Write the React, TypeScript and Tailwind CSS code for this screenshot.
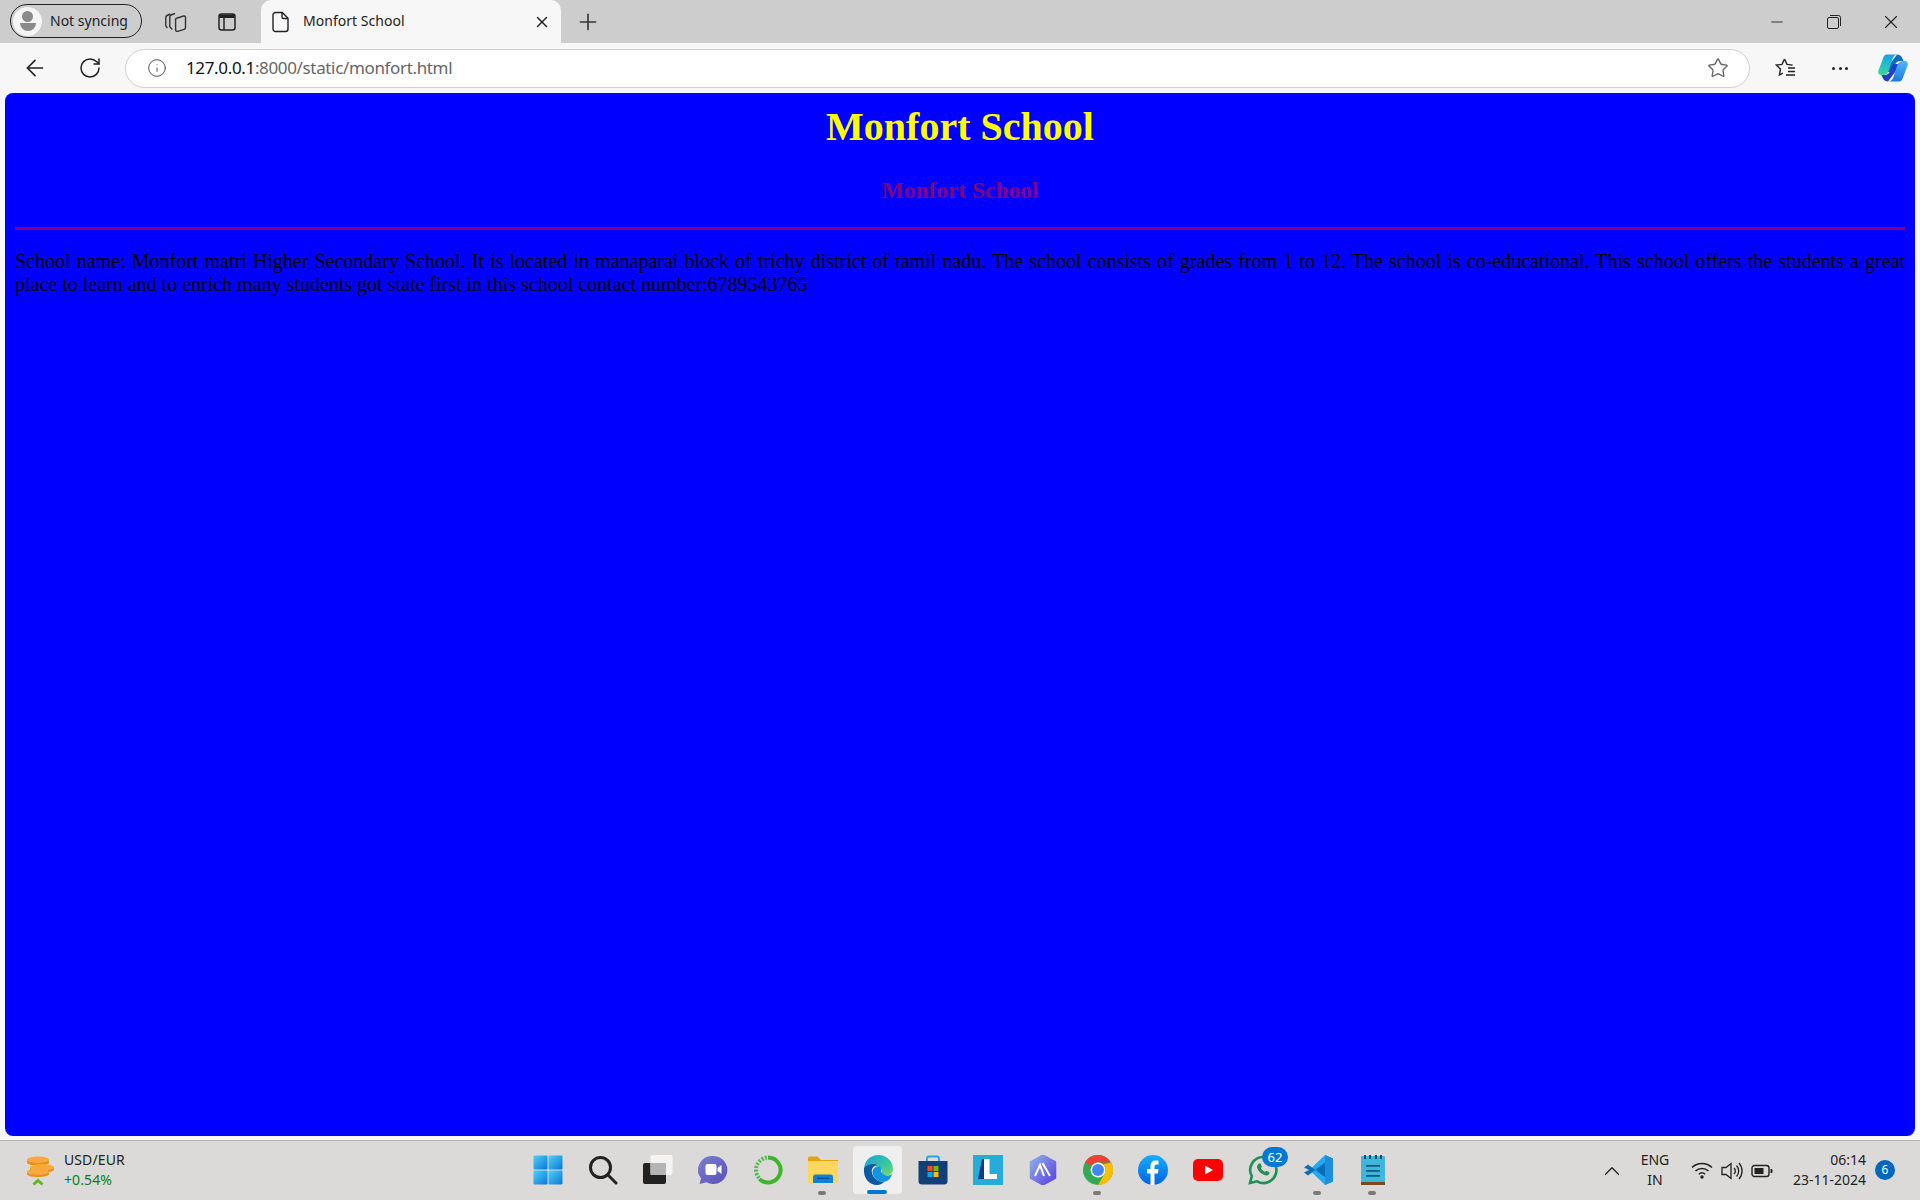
import React from 'react';
import { ArrowLeft, RotateCw, Info, Star, X, Plus, Minus, ChevronUp } from 'lucide-react';

const uiFont = "font-['Noto_Sans',sans-serif]";

const Collections = () => (
  <svg width="24" height="22" viewBox="0 0 24 22" fill="none" stroke="#333" strokeWidth="1.400">
    <path d="M7.500 3 4 4.500a2 2 0 0 0-1.200 1.800v8.500l1.500 2.200" />
    <path d="M12 2.500 8 4a2 2 0 0 0-1.200 1.800v10l2.500 2.700" />
    <path d="M13 7.500 20.500 5a1.500 1.500 0 0 1 2 1.400v10a2 2 0 0 1-1.400 1.900l-6.500 2a1.500 1.500 0 0 1-2-1.400V9.500a2 2 0 0 1 .4-2Z" />
  </svg>
);

const TabActions = () => (
  <svg width="20" height="20" viewBox="0 0 20 20" fill="none">
    <rect x="2" y="2" width="16" height="16" rx="2.500" stroke="#222" strokeWidth="1.500" />
    <path d="M2.500 3.500a1 1 0 0 1 1-1h13a1 1 0 0 1 1 1V6h-15Z" fill="#222" />
    <path d="M7 6v12" stroke="#222" strokeWidth="1.500" />
  </svg>
);

const DocIcon = () => (
  <svg width="18" height="22" viewBox="0 0 18 22" fill="none" stroke="#222" strokeWidth="1.400">
    <path d="M3.500 1.500h6.800L16 7.200V18a2.500 2.500 0 0 1-2.500 2.500h-10A2.500 2.500 0 0 1 1 18V4a2.500 2.500 0 0 1 2.500-2.500Z" />
    <path d="M10 1.800V6a1.500 1.500 0 0 0 1.500 1.500h4.300" />
  </svg>
);

const RestoreIcon = () => (
  <svg width="14" height="14" viewBox="0 0 14 14" fill="none" stroke="#222" strokeWidth="1">
    <rect x="0.500" y="2.500" width="11" height="11" rx="1.500" />
    <path d="M3 .5h8.500a2 2 0 0 1 2 2V11" />
  </svg>
);

const FavouritesIcon = () => (
  <svg width="22" height="22" viewBox="0 0 22 22" fill="none" stroke="#222" strokeWidth="1.400">
    <path d="M9.500 2 12 7.400l5.600.7M9.500 2 7 7.400l-5.600.7 4.100 4L4.400 18l3.400-1.900" />
    <path d="M13 11h7M13 14.500h7M11 18h9" />
  </svg>
);

const Copilot = () => (
  <svg width="30" height="28" viewBox="0 0 30 28">
    <defs>
      <linearGradient id="cpa" x1="0.500" y1="0" x2="0.300" y2="1">
        <stop offset="0" stopColor="#18a0e8" />
        <stop offset="1" stopColor="#3ad7a0" />
      </linearGradient>
      <linearGradient id="cpb" x1="0.600" y1="0" x2="0.400" y2="1">
        <stop offset="0" stopColor="#4db5f5" />
        <stop offset="1" stopColor="#1a78e0" />
      </linearGradient>
    </defs>
    <path d="M19 0.500c2 0 4 1 5 3l1.500 3.500h-3c-3 0-4.500 1.500-5.500 4L14 18H6z" fill="#0f6cc0" />
    <path d="M10 27.500c-2 0-4-1-5-3L3.500 21h3c3 0 4.500-1.500 5.500-4l3-7h8z" fill="#1f3fc8" />
    <path d="M9 .5h11c-3 0-4.500 1.800-5.500 4.500l-3.500 11c-.9 3-3 5-6 5H3c-2 0-3.300-1.800-2.700-4L5 4.500C5.700 2 7 .5 9 .5Z" fill="url(#cpa)" />
    <path d="M21 27.500H10c3 0 4.500-1.800 5.500-4.500l3.500-11c.9-3 3-5 6-5h2c2 0 3.300 1.800 2.700 4L25 23.500c-.7 2.500-2 4-4 4Z" fill="url(#cpb)" />
  </svg>
);

const Coins = () => (
  <svg width="30" height="30" viewBox="0 0 30 30">
    <ellipse cx="13" cy="3.500" rx="11" ry="3" fill="#f9a83a" />
    <path d="M2 3.500v3c0 1.800 5 3 11 3s11-1.200 11-3v-3c0 1.800-5 3-11 3s-11-1.200-11-3Z" fill="#ee8f12" />
    <ellipse cx="17" cy="11" rx="12" ry="3" fill="#f9a83a" />
    <path d="M5 11v2.500c0 1.800 5 3 12 3s12-1.200 12-3V11c0 1.800-5 3-12 3s-12-1.200-12-3Z" fill="#ee8f12" />
    <ellipse cx="13" cy="15.500" rx="11" ry="3" fill="#f9a83a" />
    <path d="M2 15.500v2.500c0 1.800 5 3 11 3s11-1.200 11-3v-2.500c0 1.800-5 3-11 3s-11-1.200-11-3Z" fill="#ee8f12" />
    <path d="m8.500 28.500 4.500-4 4.500 4" fill="none" stroke="#5fb81f" strokeWidth="3" />
  </svg>
);

const WindowsLogo = () => (
  <svg width="30" height="30" viewBox="0 0 30 30">
    <defs>
      <linearGradient id="win" x1="0" y1="0" x2="1" y2="1">
        <stop offset="0" stopColor="#4fd0fa" />
        <stop offset="1" stopColor="#0a78d4" />
      </linearGradient>
    </defs>
    <rect x="0.500" y="0.500" width="14" height="14" rx="1" fill="url(#win)" />
    <rect x="15.500" y="0.500" width="14" height="14" rx="1" fill="url(#win)" />
    <rect x="0.500" y="15.500" width="14" height="14" rx="1" fill="url(#win)" />
    <rect x="15.500" y="15.500" width="14" height="14" rx="1" fill="url(#win)" />
  </svg>
);

const SearchGlyph = () => (
  <svg width="30" height="30" viewBox="0 0 30 30" fill="none" stroke="#222" strokeWidth="3">
    <circle cx="12.500" cy="12.500" r="10" />
    <path d="m20 20 8 8" strokeLinecap="round" />
  </svg>
);

const TaskView = () => (
  <svg width="30" height="30" viewBox="0 0 30 30">
    <rect x="0" y="8" width="23" height="21" rx="2" fill="#222" />
    <rect x="7.500" y="0" width="22" height="20" rx="2" fill="#f3f3f3" />
    <rect x="7.500" y="8" width="15.500" height="12" fill="#b5b5b5" />
  </svg>
);

const MeetIcon = () => (
  <svg width="30" height="30" viewBox="0 0 30 30">
    <defs>
      <linearGradient id="meet" x1="0" y1="0" x2="1" y2="1">
        <stop offset="0" stopColor="#7b7fd0" />
        <stop offset="1" stopColor="#5a50b8" />
      </linearGradient>
    </defs>
    <path d="M15.500 1a14 14 0 1 1-7 26.200L1.500 29 3 23.500A14 14 0 0 1 15.500 1Z" fill="url(#meet)" />
    <rect x="7.500" y="9" width="11" height="11" rx="2" fill="#fff" />
    <path d="m19.500 13 4-3v9l-4-3Z" fill="#fff" />
  </svg>
);

const GreenRing = () => (
  <svg width="30" height="30" viewBox="0 0 30 30" fill="none">
    <path d="M15 2.500a12.500 12.500 0 1 1-8.500 21.600" stroke="#3eb52d" strokeWidth="4" />
    <path d="M6 23A12.500 12.500 0 0 1 14 2.500" stroke="#55b84b" strokeWidth="4" strokeDasharray="2 1.500" />
  </svg>
);

const FolderIcon = () => (
  <svg width="30" height="28" viewBox="0 0 30 28">
    <path d="M0 2a1.500 1.500 0 0 1 1.500-1.500h8L13 4h17v5H0Z" fill="#e3a30c" />
    <rect x="0" y="5" width="30" height="22" rx="1" fill="#fdd75d" />
    <path d="M5 27v-6a2.500 2.500 0 0 1 2.500-2.500h15A2.500 2.500 0 0 1 25 21v6Z" fill="#0f80d8" />
    <rect x="9" y="21.500" width="12" height="1.500" fill="#0a4f96" />
  </svg>
);

const EdgeIcon = () => (
  <svg width="30" height="30" viewBox="0 0 30 30">
    <defs>
      <linearGradient id="edgeA" x1="0" y1="0" x2="1" y2="1">
        <stop offset="0" stopColor="#1d9fd8" />
        <stop offset="0.600" stopColor="#37c7a0" />
        <stop offset="1" stopColor="#7fdc5f" />
      </linearGradient>
    </defs>
    <path d="M1 13C2 5 8 0 15.500 0 24 0 30 6.500 30 14c0 4-3 6.500-7 6.500-3 0-5-1-5-2.500 2-1 2-6-3-6.500-7-.5-12 .5-14 1.500Z" fill="url(#edgeA)" />
    <path d="M1 13c3-4 10-5 13-3-4 1-6 4-5 8 1 5 6 9 12 9-2 2-4 3-7 3C6 30 0 23 1 13Z" fill="#0c59a4" />
    <path d="M9.500 17c0-3 2.500-5.500 5.500-5.500s4.500 2 3 4.500c0 2 3 4.500 6 4.500 2 0 4-.5 5-2-1 5-4 8-9 8.500C14 27 9.500 22 9.500 17Z" fill="#1493df" />
  </svg>
);

const StoreIcon = () => (
  <svg width="30" height="30" viewBox="0 0 30 30" fill="none">
    <path d="M9 7V3.500A2 2 0 0 1 11 1.500h8a2 2 0 0 1 2 2V7" stroke="#25a9e0" strokeWidth="2" />
    <path d="M0.500 6h29v20a3.500 3.500 0 0 1-3.500 3.500H4A3.500 3.500 0 0 1 .5 26Z" fill="#123f78" />
    <rect x="9.500" y="11" width="5" height="5" fill="#f25022" />
    <rect x="15.500" y="11" width="5" height="5" fill="#7fba00" />
    <rect x="9.500" y="17" width="5" height="5" fill="#00a4ef" />
    <rect x="15.500" y="17" width="5" height="5" fill="#ffb900" />
  </svg>
);

const LIcon = () => (
  <svg width="30" height="30" viewBox="0 0 30 30">
    <rect width="30" height="30" fill="#25acd9" />
    <path d="M9 4h4l-1 20H5Z" fill="#123a80" />
    <path d="M11 4h5.500v15H24v5H11Z" fill="#fff" />
  </svg>
);

const HexIcon = () => (
  <svg width="30" height="30" viewBox="0 0 30 30" fill="none">
    <defs>
      <linearGradient id="hex" x1="0" y1="0" x2="1" y2="1">
        <stop offset="0" stopColor="#8fb4e8" />
        <stop offset="1" stopColor="#5a3de0" />
      </linearGradient>
    </defs>
    <path d="M15 0 27.500 7v16L15 30 2.500 23V7Z" fill="url(#hex)" stroke="url(#hex)" strokeWidth="1.500" strokeLinejoin="round" />
    <path d="m7 21 5-11 4 11M14.500 8l7.500 13" stroke="#fff" strokeWidth="2" />
  </svg>
);

const ChromeIcon = () => (
  <svg width="30" height="30" viewBox="0 0 30 30">
    <circle cx="15" cy="15" r="15" fill="#34a853" />
    <path d="M15 0a15 15 0 0 1 13 7.500H15A7.500 7.500 0 0 0 8.500 11.200L2 7A15 15 0 0 1 15 0Z" fill="#ea4335" />
    <path d="M28 7.500A15 15 0 0 1 15 30l6.500-11.200A7.500 7.500 0 0 0 20 9.500Z" fill="#fbbc04" />
    <circle cx="15" cy="15" r="7.500" fill="#fff" />
    <circle cx="15" cy="15" r="6" fill="#4285f4" />
  </svg>
);

const FacebookIcon = () => (
  <svg width="30" height="30" viewBox="0 0 30 30">
    <defs>
      <linearGradient id="fb" x1="0" y1="0" x2="0" y2="1">
        <stop offset="0" stopColor="#18acfe" />
        <stop offset="1" stopColor="#0163e0" />
      </linearGradient>
    </defs>
    <circle cx="15" cy="15" r="15" fill="url(#fb)" />
    <path d="M12.500 30V18.500H9V14h3.500v-3c0-3.500 2-5.500 5.200-5.500 1.300 0 2.300.1 2.800.2v3.800h-2c-1.500 0-2 .8-2 2.100V14h4l-.6 4.500h-3.400V30Z" fill="#fff" />
  </svg>
);

const YoutubeIcon = () => (
  <svg width="30" height="22" viewBox="0 0 30 22">
    <rect width="30" height="22" rx="5" fill="#f00" />
    <path d="m12 6.500 8 4.500-8 4.500Z" fill="#fff" />
  </svg>
);

const WhatsappIcon = () => (
  <svg width="30" height="30" viewBox="0 0 30 30" fill="none">
    <path d="M15.500 2a13 13 0 1 1-6.500 24.300L2 28l1.800-6.800A13 13 0 0 1 15.500 2Z" stroke="#1f8f55" strokeWidth="2.600" />
    <path d="M10.500 9c1-1 2-.8 2.400.2l.8 2c.2.500 0 1-.8 1.900.8 1.700 2.200 3 4 3.800.9-.9 1.400-1.100 2-.8l1.900 1c.8.400.9 1.300.2 2.200-1 1.200-2.600 1.500-4.500.8-3.800-1.400-6.200-3.900-7.300-7.100-.4-1.600.2-3 1.300-4Z" fill="#1f8f55" />
  </svg>
);

const VscodeIcon = () => (
  <svg width="30" height="30" viewBox="0 0 30 30">
    <path d="M22 0 30 3.500v23L22 30 8.500 17V13Z" fill="#23a9f2" />
    <path d="M22 0v30l8-3.500v-23Z" fill="#1b8fdc" />
    <path d="M22 7.500 5 20.500l-4-3 5-2.500-5-2.500 4-3 12 9 5 3.500Z" fill="#0a6fb8" />
  </svg>
);

const NotepadIcon = () => (
  <svg width="24" height="32" viewBox="0 0 24 32">
    <rect x="0" y="2" width="24" height="27" rx="1" fill="#3fb7dc" />
    <rect x="0" y="28" width="24" height="3" fill="#7a4a1e" />
    <path d="M3 1h2v4H3ZM8 1h2v4H8ZM14 1h2v4h-2ZM19 1h2v4h-2Z" fill="#14506e" />
    <path d="M5 11h14v1.800H5ZM5 16h14v1.800H5ZM5 21h14v1.800H5Z" fill="#0f5a7e" />
  </svg>
);

const WifiIcon = () => (
  <svg width="22" height="18" viewBox="0 0 22 18" fill="none" stroke="#222" strokeWidth="1.500">
    <path d="M1 6.500a14.500 14.500 0 0 1 20 0M4.500 10a9.500 9.500 0 0 1 13 0M7.800 13.200a4.800 4.800 0 0 1 6.400 0" />
    <circle cx="11" cy="16" r="1" fill="#222" />
  </svg>
);

const SpeakerIcon = () => (
  <svg width="22" height="20" viewBox="0 0 22 20" fill="none" stroke="#222" strokeWidth="1.300">
    <path d="M1 6.500h4L10 2.500v15l-5-4H1Z" />
    <path d="M13 7a4 4 0 0 1 0 6M15.500 4.500a8 8 0 0 1 0 11M18 2a12 12 0 0 1 0 16" />
  </svg>
);

const BatteryIcon = () => (
  <svg width="22" height="14" viewBox="0 0 22 14" fill="none">
    <rect x="1" y="1.500" width="17" height="11" rx="2.500" stroke="#222" strokeWidth="1.400" />
    <rect x="3.500" y="4" width="9" height="6" fill="#222" />
    <path d="M19.500 5h1a1 1 0 0 1 1 1v2a1 1 0 0 1-1 1h-1Z" fill="#222" />
  </svg>
);

const pinned = [
  { icon: <WindowsLogo /> },
  { icon: <SearchGlyph /> },
  { icon: <TaskView /> },
  { icon: <MeetIcon /> },
  { icon: <GreenRing /> },
  { icon: <FolderIcon />, running: true },
  { icon: <EdgeIcon />, active: true },
  { icon: <StoreIcon /> },
  { icon: <LIcon /> },
  { icon: <HexIcon /> },
  { icon: <ChromeIcon />, running: true },
  { icon: <FacebookIcon /> },
  { icon: <YoutubeIcon /> },
  { icon: <WhatsappIcon />, badge: '62' },
  { icon: <VscodeIcon />, running: true },
  { icon: <NotepadIcon />, running: true },
];

const App = () => {
  return (
    <div className={`w-[1920px] h-[1200px] flex flex-col overflow-hidden bg-[#f7f7f7] ${uiFont}`}>
      {/* Title bar with tabs */}
      <div className="h-[43px] shrink-0 flex bg-[#cdcdcd]">
        <div className="ml-[10px] mt-[4px] w-[132px] h-[34px] flex items-center rounded-full border border-[#222] pl-[2px]">
          <div className="w-[29px] h-[29px] rounded-full bg-[#f5f5f5] flex flex-col items-center justify-center gap-[1px]">
            <div className="w-[11px] h-[11px] rounded-full bg-[#8a8a8a]" />
            <div className="w-[16px] h-[8px] rounded-b-full rounded-t-[3px] bg-[#8a8a8a]" />
          </div>
          <span className="ml-[8px] mt-[-2px] text-[14px] text-[#222]">Not syncing</span>
        </div>
        <div className="ml-[7px] w-[52px] flex items-center justify-center"><Collections /></div>
        <div className="w-[52px] flex items-center justify-center"><TabActions /></div>
        <div className="relative ml-[8px] w-[300px] flex items-center bg-[#f7f7f7] rounded-t-[10px] pl-[11px]">
          <DocIcon />
          <span className="ml-[13px] mt-[-2px] text-[14px] tracking-[0.03px] text-[#222]">Monfort School</span>
          <X className="absolute left-[272px] top-[13px] w-[18px] h-[18px] text-[#222]" strokeWidth={2} />
        </div>
        <div className="ml-[5px] w-[44px] flex items-center justify-center">
          <Plus className="w-[26px] h-[26px] text-[#333]" strokeWidth={1.500} />
        </div>
        <div className="ml-auto flex">
          <div className="w-[57px] flex items-center justify-center"><Minus className="w-[18px] h-[18px] text-[#222]" strokeWidth={1.200} /></div>
          <div className="w-[57px] flex items-center justify-center"><RestoreIcon /></div>
          <div className="w-[58px] flex items-center justify-center"><X className="w-[22px] h-[22px] text-[#222]" strokeWidth={1.200} /></div>
        </div>
      </div>

      {/* Address bar */}
      <div className="h-[50px] shrink-0 flex items-center">
        <div className="ml-[12px] w-[46px] flex justify-center"><ArrowLeft className="w-[26px] h-[26px] text-[#222]" strokeWidth={1.500} /></div>
        <div className="ml-[9px] w-[46px] flex justify-center"><RotateCw className="w-[24px] h-[24px] text-[#222]" strokeWidth={1.500} /></div>
        <div className="ml-[12px] w-[1625px] h-[39px] flex items-center rounded-full border border-[#d0d0d0] bg-white pl-[21px]">
          <Info className="w-[20px] h-[20px] text-[#555]" strokeWidth={1.200} />
          <span className="ml-[19px] text-[17px] tracking-[-0.35px] text-[#111]">127.0.0.1<span className="text-[#666]">:8000/static/monfort.html</span></span>
          <Star className="ml-auto mr-[20px] w-[22px] h-[22px] text-[#666]" strokeWidth={1.500} />
        </div>
        <div className="ml-[21px] w-[30px] flex justify-center"><FavouritesIcon /></div>
        <div className="ml-[24px] w-[30px] flex justify-center gap-[3.500px]">
          <span className="w-[3px] h-[3px] rounded-full bg-[#222]" />
          <span className="w-[3px] h-[3px] rounded-full bg-[#222]" />
          <span className="w-[3px] h-[3px] rounded-full bg-[#222]" />
        </div>
        <div className="ml-[23px]"><Copilot /></div>
      </div>

      {/* Page content */}
      <div className="mx-[5px] h-[1043px] shrink-0 rounded-[8px] bg-[#0000ff] px-[10px] font-['Liberation_Serif',serif]">
        <h1 className="pt-[11px] text-center text-[40px] leading-[46px] font-bold text-[#ffff00]">Monfort School</h1>
        <h2 className="mt-[27px] text-center text-[23.4px] leading-[26px] font-bold text-[#800080]">Monfort School</h2>
        <hr className="mt-[24px] h-[3px] border-0 bg-[#800080]" />
        <p className="mt-[20px] text-justify text-[20px] leading-[23px] text-black">
          School name: Monfort matri Higher Secondary School. It is located in manaparai block of trichy district of tamil nadu. The school consists of grades from 1 to 12. The school is co-educational. This school offers the students a great place to learn and to enrich many students got state first in this school contact number:6789543765
        </p>
      </div>

      {/* Taskbar */}
      <div className="mt-[4px] flex-1 border-t border-[#b5b3b1] bg-[#dbdad8] grid grid-cols-[1fr_880px_1fr]">
        <div className="flex items-center pl-[25px]">
          <Coins />
          <div className="ml-[9px] mt-[-2px] text-[14px] tracking-[0.1px] leading-[20px]">
            <div className="text-[#222]">USD/EUR</div>
            <div className="text-[#107c10]">+0.54%</div>
          </div>
        </div>
        <div className="flex items-center pb-[1px]">
          {pinned.map((item, i) => (
            <div key={i} className="relative w-[55px] h-[48px] flex items-center justify-center">
              {item.active && <div className="absolute inset-x-[3px] inset-y-0 rounded-[4px] bg-[#efefef]" />}
              <div className="relative flex items-center justify-center">{item.icon}</div>
              {item.badge && (
                <span className="absolute left-[27px] top-[1px] w-[26px] h-[20px] rounded-full bg-[#0078d4] text-center text-[13px] leading-[20px] text-white">{item.badge}</span>
              )}
              {item.running && <span className="absolute left-[23px] bottom-[-1px] w-[8px] h-[4px] rounded-full bg-[#7a7a7a]" />}
              {item.active && <span className="absolute left-[17px] bottom-[0px] w-[20px] h-[4px] rounded-full bg-[#0078d4]" />}
            </div>
          ))}
        </div>
        <div className="relative text-[#222] text-[14px]">
          <ChevronUp className="absolute left-[199px] top-[17px] w-[26px] h-[26px]" strokeWidth={1.200} />
          <div className="absolute left-[238px] top-[9px] w-[34px] text-center leading-[20px]">ENG<br />IN</div>
          <div className="absolute left-[291px] top-[20px]"><WifiIcon /></div>
          <div className="absolute left-[321px] top-[20px]"><SpeakerIcon /></div>
          <div className="absolute left-[351px] top-[23px]"><BatteryIcon /></div>
          <div className="absolute right-[54px] top-[9px] text-right leading-[20px]">06:14<br />23-11-2024</div>
          <div className="absolute left-[475px] top-[19px] w-[20px] h-[20px] rounded-full bg-[#0067c0] text-center text-[12px] leading-[20px] text-white">6</div>
        </div>
      </div>
    </div>
  );
};

export default App;
